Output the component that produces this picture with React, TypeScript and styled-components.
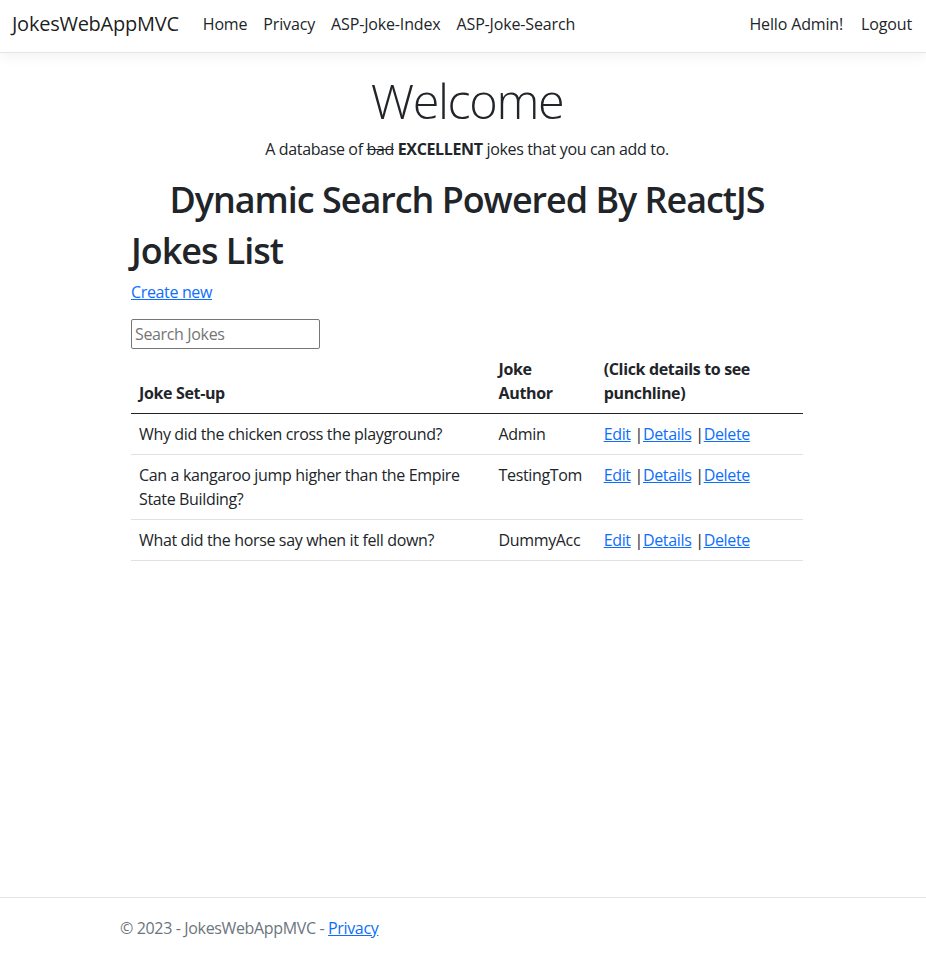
import styled, { createGlobalStyle } from "styled-components";

const GlobalStyle = createGlobalStyle`
  html, body {
    margin: 0;
    padding: 0;
    background: #fff;
  }
  body {
    font-family: "Open Sans", "Noto Sans", sans-serif;
    font-size: 16px;
    line-height: 1.5;
    letter-spacing: -0.35px;
    color: #212529;
  }
  #root {
    min-height: 954px;
    display: flex;
    flex-direction: column;
  }
`;

const jokes = [
  { setup: "Why did the chicken cross the playground?", author: "Admin" },
  {
    setup: "Can a kangaroo jump higher than the Empire State Building?",
    author: "TestingTom",
  },
  { setup: "What did the horse say when it fell down?", author: "DummyAcc" },
];

const Header = styled.header`
  height: 53px;
  box-sizing: border-box;
  border-bottom: 1px solid #e5e5e5;
  box-shadow: 0 0.25rem 0.75rem rgba(0, 0, 0, 0.05);
  display: flex;
  align-items: center;
  justify-content: space-between;
  padding: 0 14px 5px 12px;
`;

const NavGroup = styled.nav`
  display: flex;
  align-items: center;
`;

const Brand = styled.a`
  font-size: 20px;
  letter-spacing: -0.25px;
  color: rgba(0, 0, 0, 0.9);
  text-decoration: none;
  margin-right: 16px;
`;

const NavLink = styled.a<{ $last?: boolean }>`
  color: #212529;
  text-decoration: none;
  letter-spacing: -0.15px;
  padding: ${(p) => (p.$last ? "0 0 0 10px" : "0 8px")};
`;

const Main = styled.main`
  width: 672px;
  margin-left: calc(50% - 332px);
  padding: 18px 0 48px;
  flex: 1;
`;

const Centered = styled.div`
  text-align: center;
`;

const Display = styled.h1`
  font-size: 48.6px;
  font-weight: 300;
  letter-spacing: -1.4px;
  line-height: 1.2;
  margin: 0 0 8px;
`;

const Lead = styled.p`
  margin: 0 0 17px;
`;

const Heading = styled.h1`
  font-size: 35.9px;
  font-weight: 600;
  letter-spacing: -1px;
  line-height: 1.2;
  margin: 0 0 8px;
`;

const Link = styled.a`
  color: #0d6efd;
  text-decoration: underline;
`;

const Block = styled.p`
  margin: 0 0 15px;
`;

const SearchInput = styled.input`
  display: block;
  box-sizing: border-box;
  width: 189px;
  height: 30px;
  border: 1px solid #767676;
  border-radius: 2px;
  padding: 0 3px;
  font-family: inherit;
  font-size: 16px;
  letter-spacing: -0.35px;
  color: #212529;
  margin: 0;
  &::placeholder {
    color: #757575;
  }
`;

const Table = styled.table`
  width: 100%;
  border-collapse: collapse;
  table-layout: fixed;
`;

const Th = styled.th<{ $w: number }>`
  width: ${(p) => p.$w}px;
  text-align: left;
  vertical-align: bottom;
  font-weight: 700;
  padding: 8px;
  border-bottom: 1px solid #212529;
`;

const Td = styled.td`
  vertical-align: top;
  padding: 8px;
  border-bottom: 1px solid #dee2e6;
`;

const Footer = styled.footer`
  border-top: 1px solid #e5e5e5;
  height: 57px;
  box-sizing: border-box;
  display: flex;
  align-items: center;
  padding: 4px 0 0 calc(50% - 343px);
  color: #6c757d;
`;

export default function App() {
  return (
    <>
      <GlobalStyle />
      <Header>
        <NavGroup>
          <Brand href="#">JokesWebAppMVC</Brand>
          <NavLink href="#">Home</NavLink>
          <NavLink href="#">Privacy</NavLink>
          <NavLink href="#">ASP-Joke-Index</NavLink>
          <NavLink href="#">ASP-Joke-Search</NavLink>
        </NavGroup>
        <NavGroup>
          <NavLink href="#">Hello Admin!</NavLink>
          <NavLink href="#" $last>
            Logout
          </NavLink>
        </NavGroup>
      </Header>
      <Main>
        <Centered>
          <Display>Welcome</Display>
          <Lead>
            A database of <s>bad</s> <b>EXCELLENT</b> jokes that you can add
            to.
          </Lead>
          <Heading>Dynamic Search Powered By ReactJS</Heading>
        </Centered>
        <Heading>Jokes List</Heading>
        <Block>
          <Link href="#">Create new</Link>
        </Block>
        <SearchInput placeholder="Search Jokes" />
        <Table>
          <thead>
            <tr>
              <Th $w={343}>Joke Set-up</Th>
              <Th $w={89}>Joke Author</Th>
              <Th $w={191}>(Click details to see punchline)</Th>
            </tr>
          </thead>
          <tbody>
            {jokes.map((j) => (
              <tr key={j.setup}>
                <Td>{j.setup}</Td>
                <Td>{j.author}</Td>
                <Td>
                  <Link href="#">Edit</Link> |<Link href="#">Details</Link> |
                  <Link href="#">Delete</Link>
                </Td>
              </tr>
            ))}
          </tbody>
        </Table>
      </Main>
      <Footer>
        <span>
          © 2023 - JokesWebAppMVC - <Link href="#">Privacy</Link>
        </span>
      </Footer>
    </>
  );
}
